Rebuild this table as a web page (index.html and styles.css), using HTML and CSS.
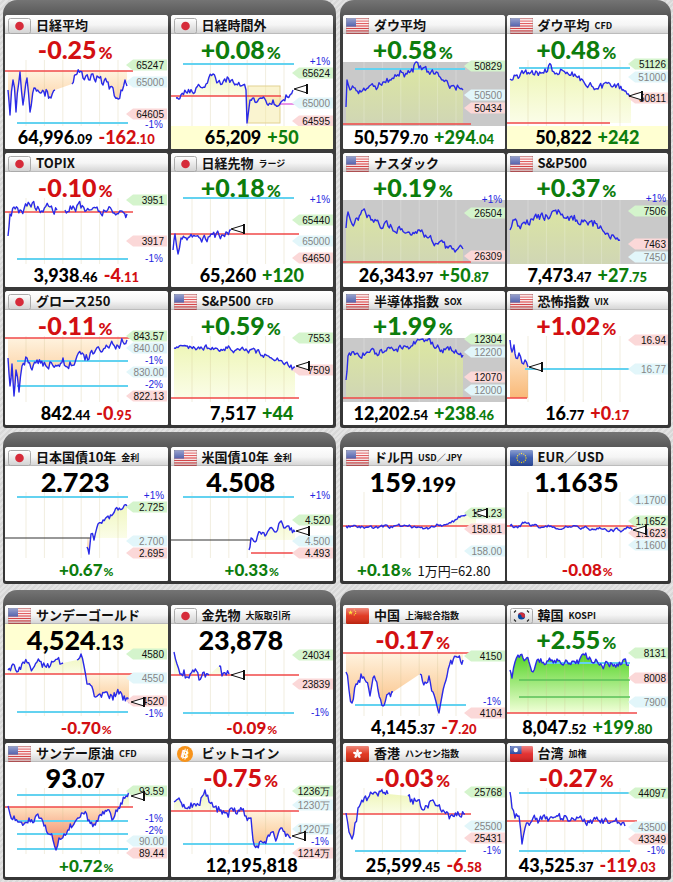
FILE: index.html
```html
<!DOCTYPE html>
<html lang="ja">
<head>
<meta charset="utf-8">
<title>Markets</title>
<link rel="stylesheet" href="styles.css">
</head>
<body>
<svg class="defs" width="0" height="0">
  <defs>
    <linearGradient id="tileg" x1="0" y1="0" x2="0" y2="1"><stop offset="0" stop-color="#ffffff"/><stop offset="1" stop-color="#d2d2d2"/></linearGradient>
    <linearGradient id="gloss" x1="0" y1="0" x2="0" y2="1"><stop offset="0" stop-color="#fff" stop-opacity=".45"/><stop offset=".5" stop-color="#fff" stop-opacity=".08"/><stop offset="1" stop-color="#000" stop-opacity=".18"/></linearGradient>
    <symbol id="jp" viewBox="0 0 23 16"><rect x=".5" y=".5" width="22" height="15" rx="2" fill="url(#tileg)" stroke="#aaa"/><circle cx="11.5" cy="8" r="4.3" fill="#d62b3a"/></symbol>
    <symbol id="us" viewBox="0 0 23 16"><rect width="23" height="16" rx="1.5" fill="#fff"/><g fill="#d8383c"><rect y="0" width="23" height="1.23"/><rect y="2.46" width="23" height="1.23"/><rect y="4.92" width="23" height="1.23"/><rect y="7.38" width="23" height="1.23"/><rect y="9.85" width="23" height="1.23"/><rect y="12.31" width="23" height="1.23"/><rect y="14.77" width="23" height="1.23"/></g><rect width="10" height="8.6" fill="#4a5aa8"/><rect width="23" height="16" rx="1.5" fill="url(#gloss)" stroke="#999" stroke-width=".6"/></symbol>
    <symbol id="cn" viewBox="0 0 23 16"><rect width="23" height="16" rx="1.5" fill="#de2910"/><polygon fill="#ffde00" points="4.5,1.9 5.1,3.7 7,3.7 5.5,4.9 6.1,6.7 4.5,5.6 2.9,6.7 3.5,4.9 2,3.7 3.9,3.7"/><g fill="#ffde00"><circle cx="8.3" cy="2" r=".6"/><circle cx="9.6" cy="3.5" r=".6"/><circle cx="9.6" cy="5.4" r=".6"/><circle cx="8.3" cy="6.9" r=".6"/></g><rect width="23" height="16" rx="1.5" fill="url(#gloss)"/></symbol>
    <symbol id="kr" viewBox="0 0 23 16"><rect x=".5" y=".5" width="22" height="15" rx="2" fill="url(#tileg)" stroke="#aaa"/><circle cx="11.5" cy="8" r="3.6" fill="#0047a0"/><path d="M7.9,8 A3.6,3.6 0 0 1 15.1,8 A1.8,1.8 0 0 1 11.5,8 A1.8,1.8 0 0 0 7.9,8Z" fill="#cd2e3a"/><g stroke="#222" stroke-width="1.1"><line x1="4" y1="4.5" x2="6" y2="2.5"/><line x1="17" y1="2.5" x2="19" y2="4.5"/><line x1="4" y1="11.5" x2="6" y2="13.5"/><line x1="17" y1="13.5" x2="19" y2="11.5"/></g></symbol>
    <symbol id="eu" viewBox="0 0 23 16"><rect width="23" height="16" rx="1.5" fill="#2d4fa8"/><g fill="#ffdd00"><circle cx="16" cy="8" r=".65"/><circle cx="15.4" cy="10.25" r=".65"/><circle cx="13.75" cy="11.9" r=".65"/><circle cx="11.5" cy="12.5" r=".65"/><circle cx="9.25" cy="11.9" r=".65"/><circle cx="7.6" cy="10.25" r=".65"/><circle cx="7" cy="8" r=".65"/><circle cx="7.6" cy="5.75" r=".65"/><circle cx="9.25" cy="4.1" r=".65"/><circle cx="11.5" cy="3.5" r=".65"/><circle cx="13.75" cy="4.1" r=".65"/><circle cx="15.4" cy="5.75" r=".65"/></g><rect width="23" height="16" rx="1.5" fill="url(#gloss)"/></symbol>
    <symbol id="hk" viewBox="0 0 23 16"><rect width="23" height="16" rx="1.5" fill="#de2910"/><g fill="#fff" transform="translate(11.5 8)"><ellipse cx="0" cy="-2.4" rx="1.3" ry="2.3"/><ellipse cx="0" cy="-2.4" rx="1.3" ry="2.3" transform="rotate(72)"/><ellipse cx="0" cy="-2.4" rx="1.3" ry="2.3" transform="rotate(144)"/><ellipse cx="0" cy="-2.4" rx="1.3" ry="2.3" transform="rotate(216)"/><ellipse cx="0" cy="-2.4" rx="1.3" ry="2.3" transform="rotate(288)"/></g><rect width="23" height="16" rx="1.5" fill="url(#gloss)"/></symbol>
    <symbol id="tw" viewBox="0 0 23 16"><rect width="23" height="16" rx="1.5" fill="#e02020"/><rect width="11.5" height="8" fill="#1a3a9c"/><circle cx="5.75" cy="4" r="2.2" fill="#fff"/><rect width="23" height="16" rx="1.5" fill="url(#gloss)"/></symbol>
    <symbol id="btc" viewBox="0 0 23 16"><circle cx="11" cy="8" r="8" fill="#f7931a"/><g transform="rotate(14 11 8)"><text x="11" y="12" text-anchor="middle" font-family="Liberation Sans, sans-serif" font-weight="700" font-size="11" fill="#fff">B</text><line x1="10" y1="2.6" x2="10" y2="13.4" stroke="#fff" stroke-width="1"/><line x1="12.2" y1="2.6" x2="12.2" y2="13.4" stroke="#fff" stroke-width="1"/></g></symbol>
  </defs>
</svg>

<div class="page">
  <!-- group 1 left -->
  <section class="panel">
    <div class="card">
      <div class="hd"><svg class="flag"><use href="#jp"/></svg><b class="ttl">日経平均</b></div>
      <div class="big dn">-0.25<i>%</i></div>
      <div class="chart" data-c="c1"></div>
      <div class="ft"><span>64,996<small>.09</small></span><span class="dn">-162<small>.10</small></span></div>
    </div>
    <div class="card">
      <div class="hd"><svg class="flag"><use href="#jp"/></svg><b class="ttl">日経時間外</b></div>
      <div class="big up">+0.08<i>%</i></div>
      <div class="chart" data-c="c2"></div>
      <div class="ft yel"><span>65,209</span><span class="up">+50</span></div>
    </div>
    <div class="card">
      <div class="hd"><svg class="flag"><use href="#jp"/></svg><b class="ttl">TOPIX</b></div>
      <div class="big dn">-0.10<i>%</i></div>
      <div class="chart" data-c="c3"></div>
      <div class="ft"><span>3,938<small>.46</small></span><span class="dn">-4<small>.11</small></span></div>
    </div>
    <div class="card">
      <div class="hd"><svg class="flag"><use href="#jp"/></svg><b class="ttl">日経先物</b><span class="sub">ラージ</span></div>
      <div class="big up">+0.18<i>%</i></div>
      <div class="chart" data-c="c4"></div>
      <div class="ft"><span>65,260</span><span class="up">+120</span></div>
    </div>
    <div class="card">
      <div class="hd"><svg class="flag"><use href="#jp"/></svg><b class="ttl">グロース250</b></div>
      <div class="big dn">-0.11<i>%</i></div>
      <div class="chart" data-c="c5"></div>
      <div class="ft"><span>842<small>.44</small></span><span class="dn">-0<small>.95</small></span></div>
    </div>
    <div class="card">
      <div class="hd"><svg class="flag"><use href="#us"/></svg><b class="ttl">S&amp;P500</b><span class="sub">CFD</span></div>
      <div class="big up">+0.59<i>%</i></div>
      <div class="chart" data-c="c6"></div>
      <div class="ft"><span>7,517</span><span class="up">+44</span></div>
    </div>
  </section>

  <!-- group 1 right -->
  <section class="panel r">
    <div class="card">
      <div class="hd"><svg class="flag"><use href="#us"/></svg><b class="ttl">ダウ平均</b></div>
      <div class="big up">+0.58<i>%</i></div>
      <div class="chart" data-c="c7"></div>
      <div class="ft"><span>50,579<small>.70</small></span><span class="up">+294<small>.04</small></span></div>
    </div>
    <div class="card">
      <div class="hd"><svg class="flag"><use href="#us"/></svg><b class="ttl">ダウ平均</b><span class="sub">CFD</span></div>
      <div class="big up">+0.48<i>%</i></div>
      <div class="chart" data-c="c8"></div>
      <div class="ft yel"><span>50,822</span><span class="up">+242</span></div>
    </div>
    <div class="card">
      <div class="hd"><svg class="flag"><use href="#us"/></svg><b class="ttl">ナスダック</b></div>
      <div class="big up">+0.19<i>%</i></div>
      <div class="chart" data-c="c9"></div>
      <div class="ft"><span>26,343<small>.97</small></span><span class="up">+50<small>.87</small></span></div>
    </div>
    <div class="card">
      <div class="hd"><svg class="flag"><use href="#us"/></svg><b class="ttl">S&amp;P500</b></div>
      <div class="big up">+0.37<i>%</i></div>
      <div class="chart" data-c="c10"></div>
      <div class="ft"><span>7,473<small>.47</small></span><span class="up">+27<small>.75</small></span></div>
    </div>
    <div class="card">
      <div class="hd"><svg class="flag"><use href="#us"/></svg><b class="ttl">半導体指数</b><span class="sub">SOX</span></div>
      <div class="big up">+1.99<i>%</i></div>
      <div class="chart" data-c="c11"></div>
      <div class="ft"><span>12,202<small>.54</small></span><span class="up">+238<small>.46</small></span></div>
    </div>
    <div class="card">
      <div class="hd"><svg class="flag"><use href="#us"/></svg><b class="ttl">恐怖指数</b><span class="sub">VIX</span></div>
      <div class="big dn">+1.02<i>%</i></div>
      <div class="chart" data-c="c12"></div>
      <div class="ft"><span>16<small>.77</small></span><span class="dn">+0<small>.17</small></span></div>
    </div>
  </section>

  <!-- group 2 left -->
  <section class="panel">
    <div class="card">
      <div class="hd"><svg class="flag"><use href="#jp"/></svg><b class="ttl">日本国債10年</b><span class="sub">金利</span></div>
      <div class="big blk">2.723</div>
      <div class="chart" data-c="c13"></div>
      <div class="ft pct"><span class="up">+0.67<i>%</i></span></div>
    </div>
    <div class="card">
      <div class="hd"><svg class="flag"><use href="#us"/></svg><b class="ttl">米国債10年</b><span class="sub">金利</span></div>
      <div class="big blk">4.508</div>
      <div class="chart" data-c="c14"></div>
      <div class="ft pct"><span class="up">+0.33<i>%</i></span></div>
    </div>
  </section>

  <!-- group 2 right -->
  <section class="panel r">
    <div class="card">
      <div class="hd"><svg class="flag"><use href="#us"/></svg><b class="ttl">ドル円</b><span class="sub">USD／JPY</span></div>
      <div class="big blk">159<small>.199</small></div>
      <div class="chart" data-c="c15"></div>
      <div class="ft pct"><span class="up">+0.18<i>%</i></span><span class="note">1万円=62.80</span></div>
    </div>
    <div class="card">
      <div class="hd"><svg class="flag"><use href="#eu"/></svg><b class="ttl">EUR／USD</b></div>
      <div class="big blk">1.1635</div>
      <div class="chart" data-c="c16"></div>
      <div class="ft pct"><span class="dn">-0.08<i>%</i></span></div>
    </div>
  </section>

  <!-- group 3 left -->
  <section class="panel g3">
    <div class="card">
      <div class="hd"><svg class="flag"><use href="#us"/></svg><b class="ttl">サンデーゴールド</b></div>
      <div class="big blk yel">4,524<small>.13</small></div>
      <div class="chart" data-c="c17"></div>
      <div class="ft pct"><span class="dn">-0.70<i>%</i></span></div>
    </div>
    <div class="card">
      <div class="hd"><svg class="flag"><use href="#jp"/></svg><b class="ttl">金先物</b><span class="sub">大阪取引所</span></div>
      <div class="big blk">23,878</div>
      <div class="chart" data-c="c18"></div>
      <div class="ft pct"><span class="dn">-0.09<i>%</i></span></div>
    </div>
    <div class="card">
      <div class="hd"><svg class="flag"><use href="#us"/></svg><b class="ttl">サンデー原油</b><span class="sub">CFD</span></div>
      <div class="big blk">93<small>.07</small></div>
      <div class="chart" data-c="c21"></div>
      <div class="ft pct"><span class="up">+0.72<i>%</i></span></div>
    </div>
    <div class="card">
      <div class="hd"><svg class="flag"><use href="#btc"/></svg><b class="ttl">ビットコイン</b></div>
      <div class="big dn">-0.75<i>%</i></div>
      <div class="chart" data-c="c22"></div>
      <div class="ft"><span>12,195,818</span></div>
    </div>
  </section>

  <!-- group 3 right -->
  <section class="panel r g3">
    <div class="card">
      <div class="hd"><svg class="flag"><use href="#cn"/></svg><b class="ttl">中国</b><span class="sub">上海総合指数</span></div>
      <div class="big dn">-0.17<i>%</i></div>
      <div class="chart" data-c="c19"></div>
      <div class="ft"><span>4,145<small>.37</small></span><span class="dn">-7<small>.20</small></span></div>
    </div>
    <div class="card">
      <div class="hd"><svg class="flag"><use href="#kr"/></svg><b class="ttl">韓国</b><span class="sub">KOSPI</span></div>
      <div class="big up">+2.55<i>%</i></div>
      <div class="chart" data-c="c20"></div>
      <div class="ft"><span>8,047<small>.52</small></span><span class="up">+199<small>.80</small></span></div>
    </div>
    <div class="card">
      <div class="hd"><svg class="flag"><use href="#hk"/></svg><b class="ttl">香港</b><span class="sub">ハンセン指数</span></div>
      <div class="big dn">-0.03<i>%</i></div>
      <div class="chart" data-c="c23"></div>
      <div class="ft"><span>25,599<small>.45</small></span><span class="dn">-6<small>.58</small></span></div>
    </div>
    <div class="card">
      <div class="hd"><svg class="flag"><use href="#tw"/></svg><b class="ttl">台湾</b><span class="sub">加権</span></div>
      <div class="big dn">-0.27<i>%</i></div>
      <div class="chart" data-c="c24"></div>
      <div class="ft"><span>43,525<small>.37</small></span><span class="dn">-119<small>.03</small></span></div>
    </div>
  </section>
</div>
<script src="script.js"></script>
</body>
</html>
```

FILE: styles.css
```css
html, body { margin: 0; padding: 0; }
body {
  width: 673px;
  height: 882px;
  overflow: hidden;
  background: repeating-linear-gradient(135deg, #e3e3e3 0 2px, #d8d8d8 2px 4px);
  font-family: Lato, "Noto Sans CJK JP", sans-serif;
}
.defs { display: block; }

.page {
  display: grid;
  grid-template-columns: 333px 331px;
  column-gap: 4px;
  row-gap: 4px;
  padding-left: 3px;
}

.panel {
  background: linear-gradient(#747474, #5e5e5e 12px, #3e3e3e 28px, #363636);
  border-radius: 14px 14px 3px 3px;
  padding: 15px 3px 3px 2px;
  display: grid;
  grid-template-columns: 1fr 1fr;
  column-gap: 3px;
  row-gap: 4px;
}
.panel.r { padding-left: 3px; column-gap: 2px; }
.g3 { margin-top: 2px; }

.card {
  height: 134px;
  background: #fff;
  border-radius: 3px 3px 1px 1px;
  overflow: hidden;
  display: flex;
  flex-direction: column;
  min-width: 0;
}

.hd {
  flex: none;
  height: 19px;
  box-sizing: border-box;
  display: flex;
  align-items: center;
  padding-left: 2px;
  background: linear-gradient(#ffffff, #f5f5f5 55%, #d6d6d6);
  border-bottom: 1px solid #bcbcbc;
  white-space: nowrap;
}
.flag { width: 23px; height: 16px; flex: none; margin: 3px 5px 0 1px; }
.ttl {
  font: 700 13px "Noto Sans CJK JP", sans-serif;
  color: #111;
  line-height: 19px;
}
.sub {
  font: 700 9px "Noto Sans CJK JP", sans-serif;
  color: #111;
  margin: 3px 0 0 5px;
}

.big {
  flex: none;
  height: 26px;
  line-height: 31px;
  text-align: center;
  padding-right: 22px;
  font-family: Lato, sans-serif;
  font-weight: 900;
  font-size: 25px;
  white-space: nowrap;
}
.big i { font-style: normal; font-size: 17px; margin-left: 2px; }
.big.blk { color: #000; font-size: 27px; }
.big.blk small { font-size: 20px; }

.chart { flex: none; height: 66px; }
.chart svg { display: block; overflow: visible; }

.ft {
  flex: none;
  height: 23px;
  line-height: 23px;
  text-align: center;
  font-family: Lato, sans-serif;
  font-weight: 900;
  font-size: 18px;
  color: #000;
  white-space: nowrap;
}
.ft small { font-size: 13px; }
.ft span + span { margin-left: 6px; }
.ft i { font-style: normal; font-size: 12px; margin-left: 1px; }
.ft.pct { font-size: 17px; }
.ft .note { font: 400 13px "Noto Sans CJK JP", sans-serif; color: #111; }

.yel { background: #ffffd2; }
.up { color: #0d7d0d; }
.dn { color: #d30f12; }

.tl { font: 10px "Liberation Sans", Arial, sans-serif; fill: #111; }
.tg { fill: #858585; }
.pl { font: 10px "Liberation Sans", Arial, sans-serif; fill: #2424e0; }
```

FILE: script.js
```javascript
(function () {
  var NS = 'http://www.w3.org/2000/svg';
  var W = 162, H = 66;
  function mk(tag, a, p) {
    var e = document.createElementNS(NS, tag);
    for (var k in a) e.setAttribute(k, a[k]);
    if (p) p.appendChild(e);
    return e;
  }
  function rng(s) {
    return function () {
      s |= 0; s = s + 0x6D2B79F5 | 0;
      var t = Math.imul(s ^ s >>> 15, 1 | s);
      t = t + Math.imul(t ^ t >>> 7, 61 | t) ^ t;
      return ((t ^ t >>> 14) >>> 0) / 4294967296;
    };
  }
  function gen(seg, amp, r) {
    var out = [], w = 0;
    for (var i = 0; i < seg.length - 1; i++) {
      var x0 = seg[i][0], y0 = seg[i][1], x1 = seg[i + 1][0], y1 = seg[i + 1][1];
      var n = Math.max(1, Math.round((x1 - x0) / 1.3));
      for (var j = 0; j < n; j++) {
        var t = j / n;
        w = w * 0.5 + (r() - 0.5) * 2 * amp;
        var y = y0 + (y1 - y0) * t + (j === 0 ? 0 : w);
        out.push([x0 + (x1 - x0) * t, Math.max(0.5, Math.min(H - 0.5, y))]);
      }
    }
    var l = seg[seg.length - 1];
    out.push([l[0], l[1]]);
    return out;
  }
  var C = '#63d2f0', R = '#f04848', K = '#333', M = '#e070e0', G = '#58c058';
  var GR = {
    yel: ['#ecf5b0', '#fbfde8'],
    org: ['#fff3df', '#f9b978'],
    red: ['#ffe2c0', '#ec6a4c'],
    grn: ['#52d424', '#f2ffd8'],
    oli: ['#dde8a0', '#d0d6b4']
  };
  var D = {
    c1: {base: 11, amp: 4.5, lines: [[11, R, 0, 128], [63, C, 12, 123, 2]], segs: [[[3, 30], [5, 55], [8, 20], [11, 52], [15, 12], [18, 45], [22, 18], [25, 52], [29, 28], [34, 32], [40, 36], [46, 38], [50, 30]], [[67, 24], [72, 14], [78, 18], [85, 20], [92, 16], [98, 25], [103, 22], [108, 28], [112, 38], [116, 30], [120, 20], [122, 26]]], tags: [['g', 5, '65247'], ['b', 22, '65000'], ['r', 54, '64605'], ['p', 64, '-1%']]},
    c2: {base: 36, amp: 3.5, lines: [[4, C, 12, 123, 2], [36, R, 0, 110], [44, M, 108, 162]], rect: [77, 26, 32, 37], segs: [[[5, 38], [15, 32], [25, 28], [35, 24], [42, 14], [47, 22], [55, 22], [65, 24], [72, 25], [75, 30], [76, 63], [79, 40], [84, 42], [90, 38], [96, 44], [102, 40], [107, 46], [110, 42], [115, 35], [122, 30]]], tags: [['p', 1, '+1%'], ['g', 13, '65624'], ['b', 43, '65000'], ['r', 61, '64595']], mk: [123, 29]},
    c3: {base: 14, amp: 4.5, lines: [[14, R, 0, 128], [61, C, 12, 123, 2]], segs: [[[3, 38], [5, 16], [9, 9], [15, 12], [22, 8], [30, 10], [38, 14], [45, 9], [52, 12]], [[60, 12], [68, 8], [76, 10], [84, 12], [92, 9], [100, 13], [108, 15], [116, 13], [122, 16]]], tags: [['g', 2, '3951'], ['r', 43, '3917'], ['p', 60, '-1%']]},
    c4: {base: 36, amp: 4.5, lines: [[0, C, 12, 123, 2], [36, R, 0, 128]], segs: [[[2, 52], [4, 36], [7, 56], [10, 40], [16, 42], [24, 38], [32, 40], [40, 36], [48, 37], [55, 34], [60, 32]]], tags: [['p', 1, '+1%'], ['g', 22, '65440'], ['b', 43, '65000'], ['r', 60, '64650']], mk: [60, 31]},
    c5: {base: 2, amp: 4.5, lines: [[2, R, 0, 128], [25, C, 12, 123, 2], [50, C, 12, 123, 2]], segs: [[[3, 22], [5, 50], [7, 28], [9, 60], [11, 34], [14, 56], [17, 30], [22, 22], [27, 34], [32, 24], [38, 30], [45, 26], [52, 30], [58, 22], [65, 26], [72, 20], [80, 24], [88, 18], [96, 16], [104, 12], [112, 9], [118, 6], [122, 4]]], tags: [['g', 0, '843.57'], ['b', 12, '840.00'], ['p', 24, '-1%'], ['b', 36, '830.00'], ['p', 48, '-2%'], ['r', 60, '822.13']]},
    c6: {base: 62, amp: 2.5, lines: [[62, R, 0, 128]], segs: [[[3, 12], [15, 10], [30, 11], [45, 12], [55, 11], [65, 14], [75, 13], [85, 17], [95, 19], [105, 24], [112, 27], [120, 29], [124, 31]]], tags: [['g', 2, '7553'], ['r', 34, '7509']], mk: [125, 30]},
    c7: {bg: 1, up: 'oli', base: 64, amp: 3.5, lines: [[9, C, 12, 122, 2], [64, R, 0, 128]], segs: [[[3, 47], [4, 20], [7, 30], [12, 28], [18, 32], [25, 28], [32, 26], [40, 22], [48, 20], [56, 16], [64, 14], [70, 12], [72, 3], [76, 8], [84, 12], [92, 14], [100, 20], [108, 26], [113, 30], [120, 30]]], tags: [['g', 6, '50829'], ['b', 35, '50500'], ['r', 48, '50434']]},
    c8: {base: 63, amp: 3.5, lines: [[8, C, 12, 123, 2], [63, R, 0, 103]], segs: [[[3, 19], [10, 15], [20, 14], [30, 12], [38, 9], [44, 5], [48, 14], [55, 10], [65, 12], [72, 16], [78, 24], [86, 27], [95, 28], [104, 26], [110, 25], [115, 30], [120, 34], [124, 36]]], tags: [['g', 4, '51126'], ['b', 17, '51000'], ['r', 38, '50811']], mk: [122, 36]},
    c9: {bg: 1, up: 'oli', base: 66, amp: 3.5, lines: [[64, R, 0, 128]], segs: [[[3, 30], [5, 14], [9, 26], [14, 20], [20, 12], [28, 22], [36, 26], [45, 28], [55, 30], [65, 34], [75, 32], [85, 40], [95, 46], [105, 50], [112, 54], [120, 51]]], tags: [['p', 1, '+1%'], ['g', 15, '26504'], ['r', 58, '26309']]},
    c10: {bg: 1, up: 'oli', base: 66, amp: 3.5, segs: [[[3, 32], [6, 22], [12, 28], [20, 22], [30, 20], [40, 18], [50, 16], [58, 20], [66, 22], [76, 24], [86, 28], [96, 33], [106, 37], [113, 42]]], tags: [['p', 0, '+1%'], ['g', 13, '7506'], ['r', 46, '7463'], ['b', 59, '7450']]},
    c11: {bg: 1, up: 'oli', base: 62, amp: 3.5, lines: [[62, R, 0, 128]], segs: [[[3, 44], [5, 20], [9, 16], [16, 20], [24, 16], [32, 18], [42, 15], [52, 14], [62, 10], [72, 8], [80, 3], [88, 8], [96, 12], [106, 14], [114, 17], [120, 19]]], tags: [['g', 3, '12304'], ['b', 16, '12200'], ['r', 41, '12070'], ['b', 54, '12000']]},
    c12: {base: 62, up: 'org', amp: 3, lines: [[33, C, 18, 125, 2], [62, R, 0, 20]], segs: [[[3, 4], [5, 16], [7, 9], [9, 22], [12, 17], [15, 27], [18, 24], [21, 31]]], tags: [['r', 4, '16.94'], ['b', 33, '16.77']], mk: [22, 31]},
    c13: {base: 46, amp: 3, lines: [[5, C, 12, 123, 2], [46, K, 0, 86, 1.2]], segs: [[[82, 55], [84, 62], [86, 42], [89, 48], [93, 32], [98, 28], [103, 24], [108, 22], [113, 18], [118, 16], [122, 14]]], tags: [['p', 3, '+1%'], ['g', 15, '2.725'], ['b', 49, '2.700'], ['r', 61, '2.695']]},
    c14: {base: 48, amp: 3, lines: [[5, C, 12, 123, 2], [48, K, 0, 80, 1.2], [61, R, 80, 128]], segs: [[[78, 58], [80, 46], [84, 50], [89, 40], [94, 44], [99, 36], [104, 40], [109, 30], [114, 36], [119, 38], [124, 40]]], tags: [['p', 3, '+1%'], ['g', 28, '4.520'], ['b', 49, '4.500'], ['r', 61, '4.493']], mk: [125, 39]},
    c15: {base: 34, amp: 1.5, lines: [[34, R, 0, 162]], segs: [[[3, 34], [20, 35], [40, 35], [60, 34], [75, 35], [85, 37], [95, 33], [105, 32], [112, 28], [118, 24], [124, 22], [130, 23], [133, 22]]], tags: [['g', 21, '159.23'], ['r', 37, '158.81'], ['b', 59, '158.00']], mk: [131, 21]},
    c16: {base: 34, amp: 1.5, lines: [[34, R, 0, 130]], segs: [[[3, 34], [12, 34], [18, 30], [24, 34], [40, 35], [60, 35], [75, 36], [85, 37], [95, 37], [105, 38], [110, 36], [115, 39], [120, 35], [126, 37]]], tags: [['b', 8, '1.1700'], ['g', 29, '1.1652'], ['r', 41, '1.1623'], ['b', 53, '1.1600']], mk: [126, 38]},
    c17: {base: 24, amp: 4.5, lines: [[24, R, 0, 128], [62, C, 12, 123, 2]], segs: [[[3, 20], [8, 14], [12, 22], [18, 12], [25, 16], [32, 12], [40, 16], [48, 12], [55, 14], [58, 13]], [[72, 10], [76, 4], [79, 16], [82, 34], [88, 40], [95, 44], [102, 42], [108, 50], [114, 44], [118, 50], [124, 53]]], tags: [['g', 4, '4580'], ['b', 28, '4550'], ['r', 51, '4520'], ['p', 63, '-1%']], mk: [126, 52]},
    c18: {base: 25, amp: 4.5, lines: [[25, R, 0, 128], [63, C, 12, 123, 2]], segs: [[[3, 2], [6, 14], [9, 24], [13, 20], [18, 28], [23, 22], [28, 30], [33, 22], [38, 25]], [[48, 16], [51, 26], [58, 24]]], tags: [['g', 5, '24034'], ['r', 34, '23839'], ['p', 62, '-1%']], mk: [60, 25]},
    c19: {base: 3, amp: 5, lines: [[3, R, 0, 128], [55, C, 12, 123, 2]], segs: [[[3, 22], [6, 40], [9, 53], [13, 34], [18, 24], [22, 30], [27, 46], [30, 28], [35, 40], [40, 56], [45, 44], [50, 42]], [[77, 24], [82, 32], [86, 26], [90, 42], [94, 56], [96, 63], [99, 46], [104, 26], [109, 14], [114, 7], [120, 10]]], tags: [['g', 6, '4150'], ['p', 51, '-1%'], ['r', 63, '4104']]},
    c20: {base: 63, up: 'grn', upTop: 4, amp: 3.5, lines: [[13, C, 40, 123, 2], [30, G, 12, 123, 1.5], [47, G, 12, 123, 1.5], [63, R, 0, 130]], segs: [[[3, 20], [5, 28], [8, 12], [11, 5], [16, 8], [22, 12], [26, 22], [30, 10], [40, 11], [50, 9], [60, 11], [70, 10], [80, 8], [90, 11], [95, 16], [100, 12], [110, 14], [116, 10], [122, 15]]], tags: [['g', 3, '8131'], ['r', 28, '8008'], ['b', 52, '7900']]},
    c21: {base: 19, dn: 'red', amp: 4, lines: [[7, C, 12, 123, 2], [19, R, 0, 128], [33, C, 12, 123, 2], [46, C, 12, 123, 2], [61, C, 12, 123, 2]], segs: [[[3, 18], [5, 26], [9, 28], [14, 34], [19, 36], [24, 30], [29, 34], [34, 30], [39, 38], [44, 46], [48, 52], [51, 62], [54, 50], [59, 46], [64, 42], [69, 36], [74, 30], [79, 26], [84, 32], [89, 36], [94, 28], [99, 26], [104, 22], [107, 32], [111, 22], [117, 16], [121, 8], [124, 3]]], tags: [['g', 3, '93.59'], ['p', 30, '-1%'], ['p', 42, '-2%'], ['b', 53, '90.00'], ['r', 65, '89.44']], mk: [126, 8]},
    c22: {base: 23, amp: 4, lines: [[23, R, 0, 128], [56, C, 12, 123, 2]], segs: [[[3, 14], [8, 10], [14, 20], [20, 15], [25, 18], [30, 10], [34, 2], [38, 14], [45, 18], [50, 22], [56, 25], [61, 20], [66, 26], [71, 22], [75, 28], [80, 30], [82, 52], [86, 58], [91, 54], [96, 50], [101, 44], [106, 50], [111, 40], [116, 46], [120, 50]]], tags: [['g', 3, '1236万'], ['b', 17, '1230万'], ['b', 41, '1220万'], ['p', 53, '-1%'], ['r', 65, '1214万']], mk: [121, 48]},
    c23: {base: 26, amp: 4, lines: [[26, R, 0, 128], [63, C, 12, 123, 2]], segs: [[[3, 25], [6, 44], [9, 51], [12, 35], [15, 20], [20, 14], [25, 10], [30, 6], [35, 8], [40, 5], [45, 6]], [[65, 8], [70, 16], [75, 12], [80, 22], [85, 20], [90, 12], [95, 18], [100, 22], [105, 25], [110, 28], [116, 27], [122, 26]]], tags: [['g', 4, '25768'], ['b', 38, '25500'], ['r', 50, '25431'], ['p', 62, '-1%']]},
    c24: {base: 33, amp: 3.5, lines: [[5, C, 12, 123, 2], [33, R, 0, 130], [63, C, 12, 123, 2]], segs: [[[3, 4], [5, 20], [8, 30], [12, 28], [15, 56], [18, 40], [21, 35], [26, 30], [31, 35], [36, 28], [41, 33], [46, 30], [51, 28], [56, 32], [61, 33], [71, 30], [81, 33], [91, 32], [101, 35], [108, 33], [114, 37], [118, 38]]], tags: [['g', 5, '44097'], ['b', 39, '43500'], ['r', 51, '43349'], ['p', 62, '-1%']]}
  };
  function tag(svg, t, y, txt) {
    if (t === 'p') {
      var p = mk('text', {x: 149, y: y + 3.5, 'text-anchor': 'middle', 'class': 'pl'}, svg);
      p.textContent = txt;
      return;
    }
    var f = {g: '#d4f4cc', r: '#fbd8d8', b: '#e2f6fa'}[t];
    mk('polygon', {points: '121,' + y + ' 128,' + (y - 5.5) + ' 162,' + (y - 5.5) + ' 162,' + (y + 5.5) + ' 128,' + (y + 5.5), fill: f}, svg);
    var e = mk('text', {x: 159, y: y + 3.6, 'text-anchor': 'end', 'class': t === 'b' ? 'tl tg' : 'tl'}, svg);
    e.textContent = txt;
  }
  function marker(svg, x, y) {
    mk('path', {d: 'M' + x + ',' + y + ' L' + (x + 13) + ',' + (y - 4) + ' L' + (x + 13) + ',' + (y + 4) + ' Z', fill: '#fff', stroke: '#111', 'stroke-width': 1}, svg);
    mk('line', {x1: x + 13, x2: x + 13, y1: y - 5, y2: y + 5, stroke: '#111', 'stroke-width': 2}, svg);
  }
  function pts(a) { return a.map(function (p) { return p[0].toFixed(1) + ',' + p[1].toFixed(1); }).join(' '); }

  var boxes = document.querySelectorAll('.chart');
  for (var idx = 0; idx < boxes.length; idx++) {
    var box = boxes[idx];
    var c = D[box.getAttribute('data-c')];
    if (!c) continue;
    var r = rng(idx * 97 + 13);
    var svg = mk('svg', {width: W, height: H, viewBox: '0 0 ' + W + ' ' + H}, box);
    var id = 'k' + idx;
    var defs = mk('defs', {}, svg);
    var base = c.base;
    var grad = function (name, key, y1, y2) {
      var g = mk('linearGradient', {id: name, gradientUnits: 'userSpaceOnUse', x1: 0, x2: 0, y1: y1, y2: y2}, defs);
      mk('stop', {offset: 0, 'stop-color': GR[key][0]}, g);
      mk('stop', {offset: 1, 'stop-color': GR[key][1]}, g);
    };
    grad(id + 'u', c.up || 'yel', c.upTop != null ? c.upTop : 0, base);
    grad(id + 'd', c.dn || 'org', base, H);
    var cu = mk('clipPath', {id: id + 'cu'}, defs);
    mk('rect', {x: 0, y: -10, width: W, height: base + 10}, cu);
    var cd = mk('clipPath', {id: id + 'cd'}, defs);
    mk('rect', {x: 0, y: base, width: W, height: H - base + 10}, cd);

    if (c.bg) mk('rect', {x: 0, y: 2, width: W, height: H - 2, fill: '#c9c9c9'}, svg);

    var segs = c.segs.map(function (s) { return gen(s, c.amp == null ? 3 : c.amp, r); });
    var all = [].concat.apply([], segs);
    var poly = pts(all) + ' ' + all[all.length - 1][0].toFixed(1) + ',' + base + ' ' + all[0][0].toFixed(1) + ',' + base;
    mk('polygon', {points: poly, fill: 'url(#' + id + 'u)', 'clip-path': 'url(#' + id + 'cu)'}, svg);
    mk('polygon', {points: poly, fill: 'url(#' + id + 'd)', 'clip-path': 'url(#' + id + 'cd)'}, svg);

    for (var x = 21; x < 128; x += 18.4) {
      mk('line', {x1: x, x2: x, y1: 0, y2: H, stroke: c.bg ? 'rgba(255,255,255,0.22)' : 'rgba(205,190,140,0.28)', 'stroke-width': 1}, svg);
    }
    if (c.rect) {
      mk('rect', {x: c.rect[0], y: c.rect[1], width: c.rect[2], height: c.rect[3], fill: 'rgba(245,230,150,0.45)', stroke: '#e2d292'}, svg);
    }
    (c.lines || []).forEach(function (l) {
      mk('line', {x1: l[2], x2: l[3], y1: l[0], y2: l[0], stroke: l[1], 'stroke-width': l[4] || 1.6}, svg);
    });
    segs.forEach(function (s) {
      mk('polyline', {points: pts(s), fill: 'none', stroke: '#2a2ae8', 'stroke-width': 1.4, 'stroke-linejoin': 'round'}, svg);
    });
    (c.tags || []).forEach(function (t) { tag(svg, t[0], t[1], t[2]); });
    if (c.mk) marker(svg, c.mk[0], c.mk[1]);
  }
})();
```
